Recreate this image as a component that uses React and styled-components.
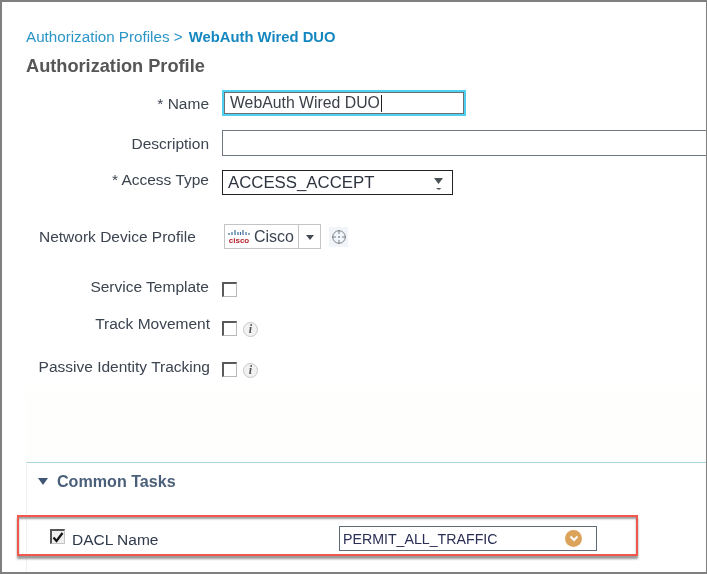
import styled, { createGlobalStyle } from 'styled-components'

const GlobalStyle = createGlobalStyle`
  html, body {
    margin: 0;
    padding: 0;
    background: #fff;
  }
  * {
    box-sizing: border-box;
  }
`

const App = () => {
  return (
    <>
      <GlobalStyle />
      <Frame>
        <Header>
          <Breadcrumb>
            Authorization Profiles &gt; <strong>WebAuth Wired DUO</strong>
          </Breadcrumb>
          <Title>Authorization Profile</Title>
        </Header>

        <Row $top={14}>
          <Label $lift={-2}>* Name</Label>
          <NameInput>WebAuth Wired DUO<Caret /></NameInput>
        </Row>
        <Row $top={14}>
          <Label $lift={-2}>Description</Label>
          <DescriptionInput />
        </Row>
        <Row $top={14}>
          <Label $lift={6}>* Access Type</Label>
          <AccessSelect>
            ACCESS_ACCEPT
            <svg width="11" height="14" viewBox="0 0 11 14">
              <path d="M1 2h9L5.500 8z" fill="#4a5256" />
              <path d="M3 12h5l-1 1.500H5z" fill="#4a5256" />
            </svg>
          </AccessSelect>
        </Row>

        <Row $top={29}>
          <Label $left>Network Device Profile</Label>
          <ProfileSelect>
            <ProfileName>
              <CiscoLogo>
                <svg width="22" height="8" viewBox="0 0 22 8">
                  <path
                    d="M1 4v2M4 3v3M7 1v5M10 3v3M12.500 3v3M15 1v5M18 3v3M21 4v2"
                    stroke="#3f6f9c"
                    strokeWidth="1.200"
                  />
                </svg>
                <span>cisco</span>
              </CiscoLogo>
              Cisco
            </ProfileName>
            <ProfileArrow>
              <svg width="10" height="6" viewBox="0 0 10 6">
                <path d="M1 0h8L5 5z" fill="#444b52" />
              </svg>
            </ProfileArrow>
          </ProfileSelect>
          <TargetButton>
            <svg width="16" height="16" viewBox="0 0 16 16" fill="none">
              <circle cx="8" cy="8" r="6.300" stroke="#7b8288" strokeWidth="1" />
              <path d="M8 1v4M8 11v4M1 8h4M11 8h4" stroke="#7b8288" strokeWidth="1" />
              <circle cx="8" cy="8" r="0.900" fill="#7b8288" />
            </svg>
          </TargetButton>
        </Row>

        <Row $top={29}>
          <Label $lift={5}>Service Template</Label>
          <Check />
        </Row>
        <Row $top={14}>
          <Label $lift={8} $nudge={-1}>Track Movement</Label>
          <Check />
          <InfoIcon>i</InfoIcon>
        </Row>
        <Row $top={17}>
          <Label $lift={4} $nudge={-1}>Passive Identity Tracking</Label>
          <Check />
          <InfoIcon>i</InfoIcon>
        </Row>

        <Tinted />

        <Tasks>
          <TasksHeading>
            <svg width="10" height="7" viewBox="0 0 10 7">
              <path d="M0 0h10L5 7z" fill="#3f5675" />
            </svg>
            Common Tasks
          </TasksHeading>
          <Highlight>
            <DaclCheck>
              <svg width="12" height="11" viewBox="0 0 12 11" fill="none">
                <path d="M1.500 5.500l3 3.500 6-8" stroke="#111" strokeWidth="2.200" />
              </svg>
            </DaclCheck>
            <DaclLabel>DACL Name</DaclLabel>
            <DaclInput>
              PERMIT_ALL_TRAFFIC
              <OrangeButton>
                <svg width="10" height="7" viewBox="0 0 10 7" fill="none">
                  <path d="M1.500 1.500L5 5l3.500-3.500" stroke="#fff" strokeWidth="2" />
                </svg>
              </OrangeButton>
            </DaclInput>
          </Highlight>
        </Tasks>
      </Frame>
    </>
  )
}

export default App

const Frame = styled.div`
  width: 707px;
  height: 574px;
  overflow: hidden;
  border: 2px solid #7f7f7f;
  border-right-width: 1px;
  background: #fff;
  font-family: "Liberation Sans", Arial, sans-serif;
  color: #3c4450;
  filter: blur(0.35px);
`
const Header = styled.div`
  padding: 26px 0 0 24px;
`
const Breadcrumb = styled.div`
  height: 18px;
  line-height: 18px;
  font-size: 15.2px;
  color: #2a95c8;
  strong {
    margin-left: 2px;
    color: #1487c0;
    font-size: 14.8px;
  }
`
const Title = styled.div`
  margin-top: 10px;
  height: 20px;
  line-height: 20px;
  font-size: 18.2px;
  font-weight: bold;
  color: #565656;
`
const Row = styled.div`
  display: flex;
  align-items: center;
  margin-top: ${props => props.$top}px;
`
const Label = styled.div`
  flex: none;
  width: ${props => (props.$left ? '185px' : '207px')};
  margin-left: ${props => (props.$left ? '37px' : '0')};
  margin-right: ${props => (props.$left ? '0' : '13px')};
  margin-bottom: ${props => props.$lift || 0}px;
  text-align: ${props => (props.$left ? 'left' : 'right')};
  position: relative;
  left: ${props => -(props.$nudge || 0)}px;
  font-size: 15.5px;
  line-height: 18px;
  white-space: nowrap;
`
const NameInput = styled.div`
  display: flex;
  align-items: center;
  width: 244px;
  height: 26px;
  padding-left: 6px;
  border: 2px solid #4fd0ef;
  box-shadow: inset 0 0 0 1px #6a7075;
  font-size: 15.8px;
  color: #3a3f48;
`
const Caret = styled.span`
  width: 1px;
  height: 17px;
  margin-left: 1px;
  background: #222;
`
const DescriptionInput = styled.div`
  flex: 1;
  height: 26px;
  border: 1px solid #6f7880;
  border-right: none;
`
const AccessSelect = styled.div`
  display: flex;
  align-items: center;
  justify-content: space-between;
  width: 231px;
  height: 25px;
  padding: 0 8px 0 5px;
  border: 1px solid #222;
  font-size: 16.8px;
  color: #2f3540;
`
const ProfileSelect = styled.div`
  display: flex;
  width: 97px;
  height: 25px;
  border: 1px solid #c4c4c4;
  background: #fff;
`
const ProfileName = styled.div`
  display: flex;
  align-items: center;
  gap: 5px;
  width: 74px;
  padding-left: 4px;
  border-right: 1px solid #c4c4c4;
  font-size: 16px;
  color: #3c4450;
`
const CiscoLogo = styled.div`
  display: flex;
  flex-direction: column;
  align-items: center;
  width: 20px;
  span {
    font-size: 8px;
    line-height: 7px;
    font-weight: bold;
    color: #b5232e;
  }
`
const ProfileArrow = styled.div`
  flex: 1;
  display: flex;
  align-items: center;
  justify-content: center;
  padding-top: 2px;
`
const TargetButton = styled.div`
  display: flex;
  align-items: center;
  justify-content: center;
  width: 19px;
  height: 20px;
  margin-left: 8px;
  background: #f1f4f8;
`
const Check = styled.div`
  width: 15px;
  height: 15px;
  border: 1px solid #b9b9b9;
  border-top: 2px solid #5a5a5a;
  border-left: 2px solid #5a5a5a;
  background: #fff;
`
const InfoIcon = styled.div`
  width: 15px;
  height: 15px;
  margin: 2px 0 0 6px;
  border: 1px solid #c8c8c8;
  border-radius: 50%;
  background: #f2f2f2;
  font-family: "Liberation Serif", serif;
  font-style: italic;
  font-weight: bold;
  font-size: 12px;
  line-height: 13px;
  text-align: center;
  color: #555;
`
const Tinted = styled.div`
  height: 82px;
  margin: 0 0 0 24px;
  background: linear-gradient(#fff, #fefefc 20%);
`
const Tasks = styled.div`
  height: 120px;
  margin-left: 24px;
  border-top: 1px solid #a9d6dc;
  border-left: 1px solid #f0f0f0;
`
const TasksHeading = styled.div`
  display: flex;
  align-items: center;
  gap: 9px;
  margin: 8px 0 0 11px;
  height: 20px;
  font-size: 16.1px;
  font-weight: bold;
  color: #4a5f7a;
`
const Highlight = styled.div`
  display: flex;
  align-items: center;
  width: 621px;
  height: 41px;
  margin: 24px 0 0 -10px;
  padding-left: 31px;
  border: 2px solid #f2574e;
  box-shadow: 0 3px 2px #9a9a9a, inset 0 2px 2px #a0a0a0;
`
const DaclCheck = styled.div`
  display: flex;
  align-items: center;
  justify-content: center;
  width: 15px;
  height: 15px;
  margin-top: 2px;
  border: 1px solid #c4c4c4;
  border-top: 2px solid #555;
  border-left: 2px solid #555;
  background: #efefef;
`
const DaclLabel = styled.div`
  width: 267px;
  margin: 9px 0 0 7px;
  font-size: 15.5px;
  color: #2f3a4c;
`
const DaclInput = styled.div`
  display: flex;
  align-items: center;
  justify-content: space-between;
  width: 258px;
  height: 25px;
  margin-top: 6px;
  padding: 0 14px 0 3px;
  border: 1px solid #5f6b78;
  font-size: 14.2px;
  color: #2a2f55;
`
const OrangeButton = styled.div`
  display: flex;
  align-items: center;
  justify-content: center;
  width: 17px;
  height: 17px;
  border-radius: 50%;
  background: #dca35a;
`
